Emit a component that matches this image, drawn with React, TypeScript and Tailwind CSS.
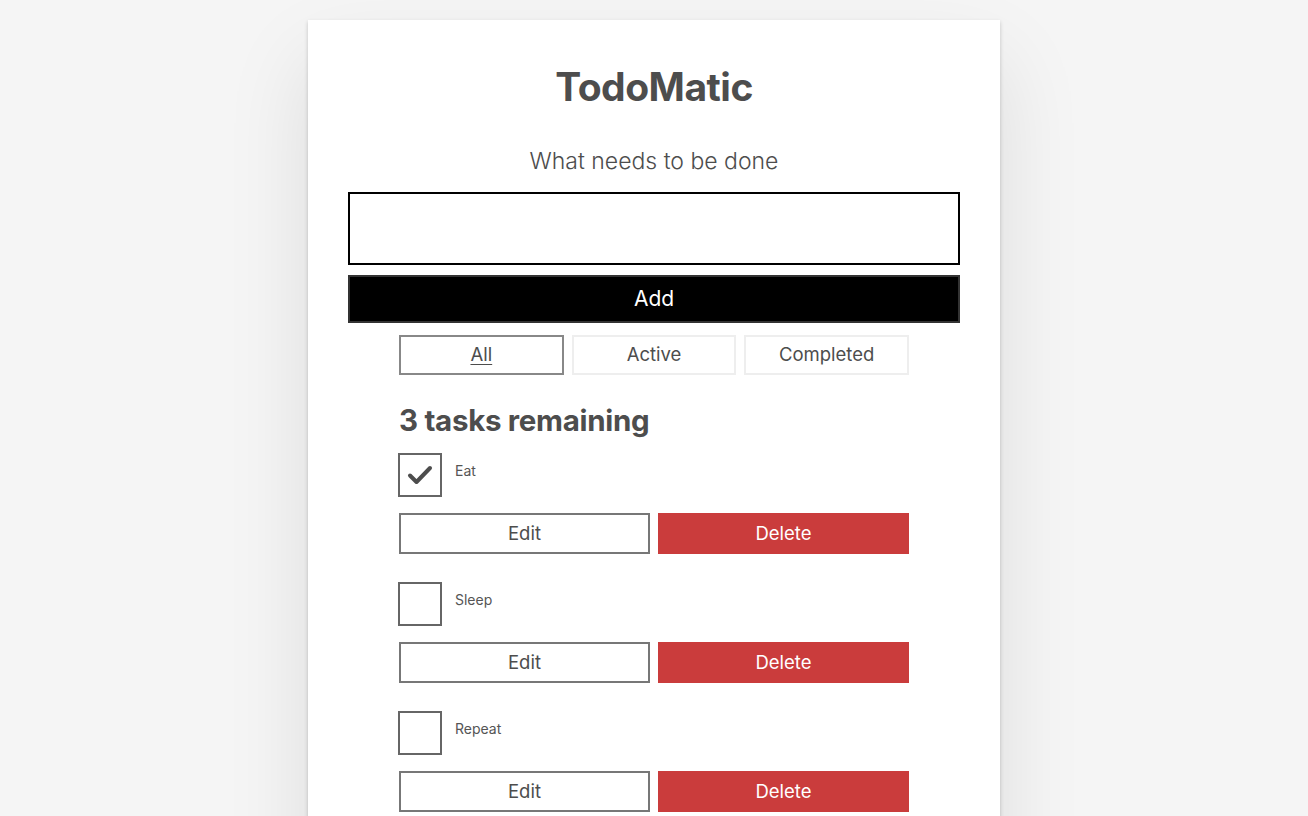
import React, { useState } from 'react';

type Task = { id: string; name: string; completed: boolean };

const initialTasks: Task[] = [
  { id: 'todo-0', name: 'Eat', completed: true },
  { id: 'todo-1', name: 'Sleep', completed: false },
  { id: 'todo-2', name: 'Repeat', completed: false },
];

export default function App() {
  const [tasks, setTasks] = useState(initialTasks);
  const [filter, setFilter] = useState('All');

  const toggle = (id: string) =>
    setTasks(tasks.map((t) => (t.id === id ? { ...t, completed: !t.completed } : t)));

  return (
    <div className="min-h-screen bg-[#f5f5f5] pt-[20px] font-['Inter',sans-serif] text-[#4d4d4d]">
      <div className="mx-auto w-[692px] bg-white px-10 pt-[45px] pb-10 shadow-[0_2px_4px_rgba(0,0,0,0.2),0_40px_80px_rgba(0,0,0,0.1)]">
        <h1 className="text-center text-[39px] font-bold leading-[44px] tracking-[-0.5px]">TodoMatic</h1>
        <form className="mt-[38px]">
          <label htmlFor="new-todo" className="block text-center text-[23px] font-light leading-[28px]">
            What needs to be done
          </label>
          <input
            id="new-todo"
            type="text"
            className="mt-[17px] block h-[73px] w-full border-2 border-black bg-white px-2 text-[20px] outline-none"
          />
          <button
            type="button"
            className="mt-[10px] block h-[48px] w-full border-2 border-[#333] bg-black text-[21px] text-white"
          >
            Add
          </button>
        </form>

        <div className="mx-auto w-[510px]">
          <div className="mt-[12px] grid grid-cols-3 gap-2">
            {['All', 'Active', 'Completed'].map((f) => (
              <FilterButton key={f} label={f} pressed={filter === f} onClick={() => setFilter(f)} />
            ))}
          </div>

          <h2 className="mt-[28px] text-[29.5px] font-bold leading-[34px] tracking-[-0.3px]">
            {tasks.length} tasks remaining
          </h2>

          <ul className="mt-[16px]">
            {tasks.map((t) => (
              <li key={t.id} className="mb-[28px]">
                <div className="flex items-start">
                  <button
                    type="button"
                    onClick={() => toggle(t.id)}
                    className="flex h-[44px] w-[44px] shrink-0 items-center justify-center border-2 border-[#666] bg-white -ml-px"
                  >
                    {t.completed && (
                      <svg width="26" height="22" viewBox="0 0 26 22">
                        <path d="M3 11.5 L9.5 18 L23 4" fill="none" stroke="#4d4d4d" strokeWidth="4" strokeLinecap="round" strokeLinejoin="round" />
                      </svg>
                    )}
                  </button>
                  <label className="ml-[13px] mt-[8px] text-[14px] leading-[20px] text-[#555]">{t.name}</label>
                </div>
                <div className="mt-[16px] grid grid-cols-2 gap-2">
                  <button
                    type="button"
                    className="h-[41px] border-2 border-[#777] bg-white text-[18.5px] text-[#4d4d4d]"
                  >
                    Edit
                  </button>
                  <button
                    type="button"
                    className="h-[41px] border-2 border-[#ca3c3c] bg-[#ca3c3c] text-[18.5px] text-white"
                  >
                    Delete
                  </button>
                </div>
              </li>
            ))}
          </ul>
        </div>
      </div>
    </div>
  );
}

function FilterButton({ label, pressed, onClick }: { label: string; pressed: boolean; onClick: () => void }) {
  return (
    <button
      type="button"
      onClick={onClick}
      className={`h-[40px] bg-white text-[18.5px] text-[#4d4d4d] ${
        pressed ? 'border-2 border-[#888] underline underline-offset-[3px]' : 'border-2 border-[#eee]'
      }`}
    >
      {label}
    </button>
  );
}
